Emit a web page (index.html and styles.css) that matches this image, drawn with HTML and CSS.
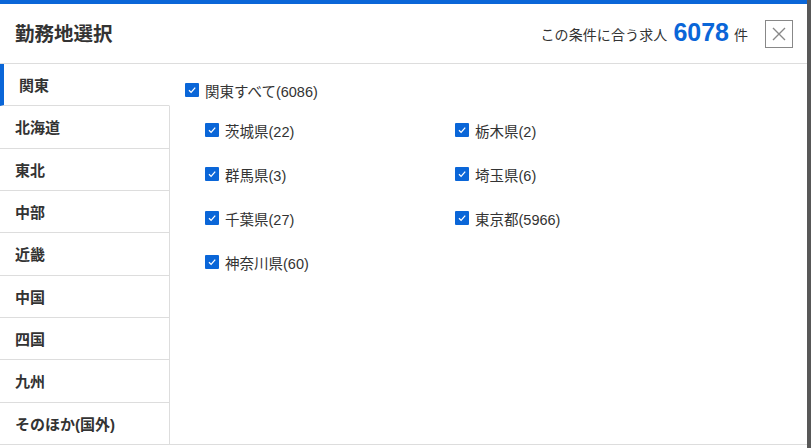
FILE: index.html
```html
<!DOCTYPE html>
<html lang="ja">
<head>
<meta charset="utf-8">
<title>勤務地選択</title>
<link rel="stylesheet" href="styles.css">
</head>
<body>
<div class="modal">
  <header class="head">
    <h1 class="title">勤務地選択</h1>
    <div class="count">
      <span class="count-label">この条件に合う求人</span>
      <span class="count-num">6078</span>
      <span class="count-unit">件</span>
      <button class="close" aria-label="閉じる">
        <svg width="14" height="14" viewBox="0 0 14 14"><path d="M1 1L13 13M13 1L1 13" stroke="#888" stroke-width="1.4" fill="none"/></svg>
      </button>
    </div>
  </header>
  <div class="body">
    <nav class="side">
      <div class="side-item active">関東</div>
      <div class="side-item">北海道</div>
      <div class="side-item">東北</div>
      <div class="side-item">中部</div>
      <div class="side-item">近畿</div>
      <div class="side-item">中国</div>
      <div class="side-item">四国</div>
      <div class="side-item">九州</div>
      <div class="side-item last">そのほか(国外)</div>
    </nav>
    <section class="content">
      <label class="check all"><span class="box"><svg width="10" height="10" viewBox="0 0 10 10"><path d="M2 5.3L4.1 7.4L8.2 2.6" stroke="#fff" stroke-width="1.3" fill="none"/></svg></span>関東すべて(6086)</label>
      <div class="grid">
        <label class="check"><span class="box"><svg width="10" height="10" viewBox="0 0 10 10"><path d="M2 5.3L4.1 7.4L8.2 2.6" stroke="#fff" stroke-width="1.3" fill="none"/></svg></span>茨城県(22)</label>
        <label class="check"><span class="box"><svg width="10" height="10" viewBox="0 0 10 10"><path d="M2 5.3L4.1 7.4L8.2 2.6" stroke="#fff" stroke-width="1.3" fill="none"/></svg></span>栃木県(2)</label>
        <label class="check"><span class="box"><svg width="10" height="10" viewBox="0 0 10 10"><path d="M2 5.3L4.1 7.4L8.2 2.6" stroke="#fff" stroke-width="1.3" fill="none"/></svg></span>群馬県(3)</label>
        <label class="check"><span class="box"><svg width="10" height="10" viewBox="0 0 10 10"><path d="M2 5.3L4.1 7.4L8.2 2.6" stroke="#fff" stroke-width="1.3" fill="none"/></svg></span>埼玉県(6)</label>
        <label class="check"><span class="box"><svg width="10" height="10" viewBox="0 0 10 10"><path d="M2 5.3L4.1 7.4L8.2 2.6" stroke="#fff" stroke-width="1.3" fill="none"/></svg></span>千葉県(27)</label>
        <label class="check"><span class="box"><svg width="10" height="10" viewBox="0 0 10 10"><path d="M2 5.3L4.1 7.4L8.2 2.6" stroke="#fff" stroke-width="1.3" fill="none"/></svg></span>東京都(5966)</label>
        <label class="check"><span class="box"><svg width="10" height="10" viewBox="0 0 10 10"><path d="M2 5.3L4.1 7.4L8.2 2.6" stroke="#fff" stroke-width="1.3" fill="none"/></svg></span>神奈川県(60)</label>
      </div>
    </section>
  </div>
</div>
</body>
</html>
```

FILE: styles.css
```css
* { box-sizing: border-box; }
html, body { margin: 0; padding: 0; height: 100%; }
body {
  background: #585858;
  font-family: "Liberation Sans", "Noto Sans CJK JP", sans-serif;
  color: #333;
  overflow: hidden;
}
.modal {
  width: 807px;
  height: 448px;
  background: #fff;
  border-top: 4px solid #0a66d8;
  display: flex;
  flex-direction: column;
}
.head {
  height: 60px;
  border-bottom: 1px solid #ddd;
  display: flex;
  align-items: center;
  justify-content: space-between;
  padding: 0 14px 0 15px;
}
.title {
  margin: 0;
  font-size: 19.5px;
  font-weight: bold;
  color: #333;
  position: relative;
  top: -1px;
}
.count {
  display: flex;
  align-items: center;
}
.count-label { font-size: 14px; color: #333; letter-spacing: 0.1px; }
.count-num {
  font-size: 25px;
  font-weight: bold;
  color: #0a66d8;
  margin: 0 5px 0 6px;
  position: relative;
  top: -1px;
}
.count-unit { font-size: 14px; color: #333; }
.close {
  margin-left: 17px;
  width: 28px;
  height: 28px;
  border: 1px solid #888;
  background: #fff;
  padding: 0;
  display: flex;
  align-items: center;
  justify-content: center;
}
.body {
  height: 381px;
  display: flex;
  border-bottom: 1px solid #ddd;
}
.side {
  width: 170px;
  display: flex;
  flex-direction: column;
}
.side-item {
  flex: 1;
  display: flex;
  align-items: center;
  padding-left: 15px;
  font-size: 15px;
  font-weight: bold;
  color: #333;
  border-bottom: 1px solid #ddd;
  border-right: 1px solid #ddd;
}
.side-item.last { border-bottom: none; }
.side-item.active {
  border-left: 4px solid #0a66d8;
  border-right-color: transparent;
}
.content {
  flex: 1;
  padding: 16px 0 0 15px;
}
.check {
  display: flex;
  align-items: center;
  height: 20px;
  font-size: 14.5px;
  color: #333;
}
.box {
  width: 14px;
  height: 14px;
  background: #0a66d8;
  border-radius: 1px;
  display: inline-flex;
  align-items: center;
  justify-content: center;
  margin-right: 6px;
}
.grid {
  margin-top: 8px;
  padding-left: 20px;
  display: grid;
  grid-template-columns: 250px 250px;
  grid-auto-rows: 44px;
}
.grid .check { height: 44px; }
```
